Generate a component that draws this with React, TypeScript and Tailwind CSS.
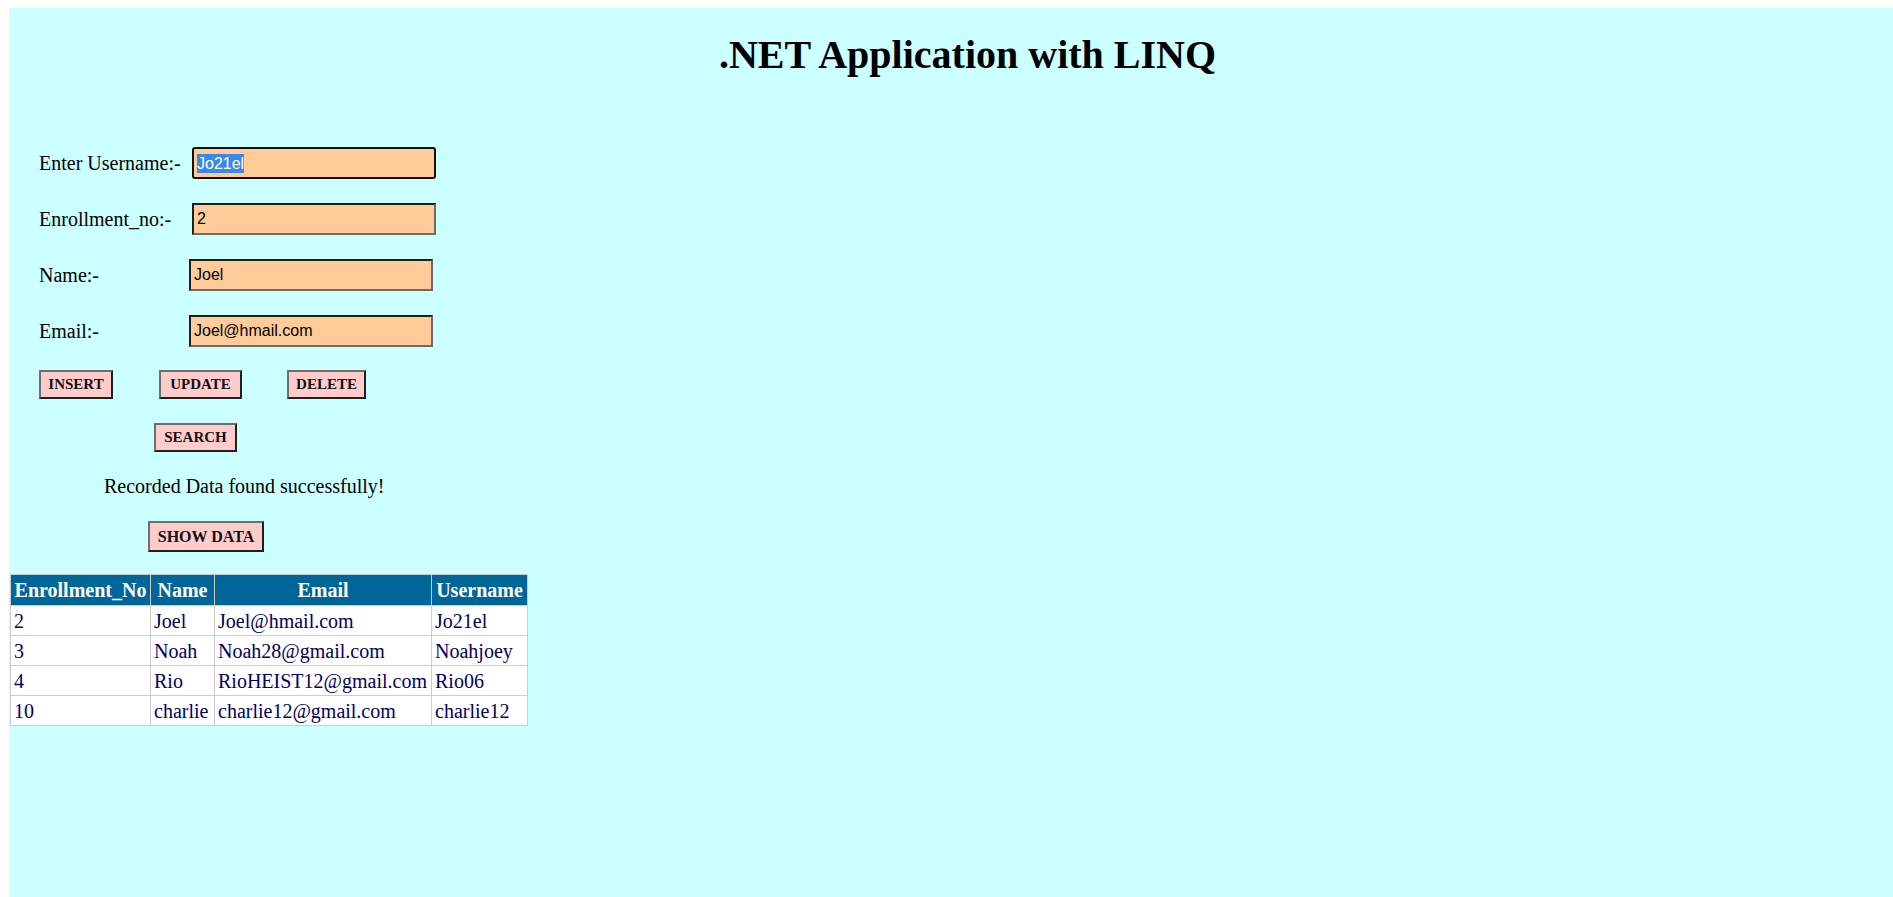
import React from "react"

const rows = [
  { no: "2", name: "Joel", email: "Joel@hmail.com", user: "Jo21el" },
  { no: "3", name: "Noah", email: "Noah28@gmail.com", user: "Noahjoey" },
  { no: "4", name: "Rio", email: "RioHEIST12@gmail.com", user: "Rio06" },
  { no: "10", name: "charlie", email: "charlie12@gmail.com", user: "charlie12" },
]

function Btn({ label, className = "" }: { label: string; className?: string }) {
  return (
    <button
      type="button"
      className={
        "h-[29px] px-[6px] bg-[#ffcccc] border-2 border-[#6e6e6e] border-r-[#1f1f1f] border-b-[#1f1f1f] font-['Liberation_Serif',serif] font-bold text-[15px] text-[#111] leading-none " +
        className
      }
    >
      {label}
    </button>
  )
}

const inputCls =
  "w-[244px] h-[32px] bg-[#ffcc99] border-2 border-[#1e1e1e] border-r-[#6a6a6a] border-b-[#6a6a6a] pl-[3px] font-['Liberation_Sans',Arial,sans-serif] text-[16px] text-black outline-none"

export default function App() {
  return (
    <div className="min-h-screen bg-white pl-[9px] pt-[8px]">
      <div className="bg-[#ccffff] h-[889px] font-['Liberation_Serif',serif] text-[20px] text-black">
        <h1 className="pt-[25px] pl-[33px] text-center text-[40px] font-bold leading-[44px]">
          .NET Application with LINQ
        </h1>

        <div className="ml-[30px] mt-[70px] flex flex-col items-start">
          <div className="flex items-center h-[32px]">
            <span className="w-[153px]">Enter Username:-</span>
            <div className="w-[244px] h-[32px] bg-[#ffcc99] border-2 border-[#111] rounded-[3px] flex items-center pl-[3px] font-['Liberation_Sans',Arial,sans-serif] text-[16px]">
              <span className="bg-[#3b88eb] text-white leading-[19px]">Jo21el</span>
            </div>
          </div>

          <div className="flex items-center h-[32px] mt-[24px]">
            <span className="w-[153px]">Enrollment_no:-</span>
            <input className={inputCls} defaultValue="2" />
          </div>

          <div className="flex items-center h-[32px] mt-[24px]">
            <span className="w-[150px]">Name:-</span>
            <input className={inputCls} defaultValue="Joel" />
          </div>

          <div className="flex items-center h-[32px] mt-[24px]">
            <span className="w-[150px]">Email:-</span>
            <input className={inputCls} defaultValue="Joel@hmail.com" />
          </div>

          <div className="flex items-center mt-[23px]">
            <Btn label="INSERT" className="w-[74px]" />
            <Btn label="UPDATE" className="w-[83px] ml-[46px]" />
            <Btn label="DELETE" className="w-[79px] ml-[45px]" />
          </div>

          <Btn label="SEARCH" className="w-[83px] ml-[115px] mt-[24px]" />

          <p className="ml-[65px] mt-[23px] leading-[22px]">Recorded Data found successfully!</p>

          <button
            type="button"
            className="ml-[109px] mt-[24px] h-[31px] w-[116px] bg-[#ffcccc] border-2 border-[#6e6e6e] border-r-[#1f1f1f] border-b-[#1f1f1f] font-['Liberation_Serif',serif] font-bold text-[16px] text-[#111] leading-none"
          >
            SHOW DATA
          </button>
        </div>

        <table className="ml-[1px] mt-[22px] border-collapse text-[20px] leading-[22px]">
          <thead>
            <tr className="bg-[#006699] text-white font-bold h-[31px]">
              <th className="w-[140px] border border-[#cccccc] px-[3px] text-center whitespace-nowrap">Enrollment_No</th>
              <th className="w-[64px] border border-[#cccccc] px-[3px] text-center">Name</th>
              <th className="w-[217px] border border-[#cccccc] px-[3px] text-center">Email</th>
              <th className="w-[96px] border border-[#cccccc] px-[3px] text-center">Username</th>
            </tr>
          </thead>
          <tbody>
            {rows.map((r) => (
              <tr key={r.no} className="bg-white text-[#000066] h-[30px]">
                <td className="border border-[#cccccc] px-[3px]">{r.no}</td>
                <td className="border border-[#cccccc] px-[3px]">{r.name}</td>
                <td className="border border-[#cccccc] px-[3px] whitespace-nowrap">{r.email}</td>
                <td className="border border-[#cccccc] px-[3px]">{r.user}</td>
              </tr>
            ))}
          </tbody>
        </table>
      </div>
    </div>
  )
}
